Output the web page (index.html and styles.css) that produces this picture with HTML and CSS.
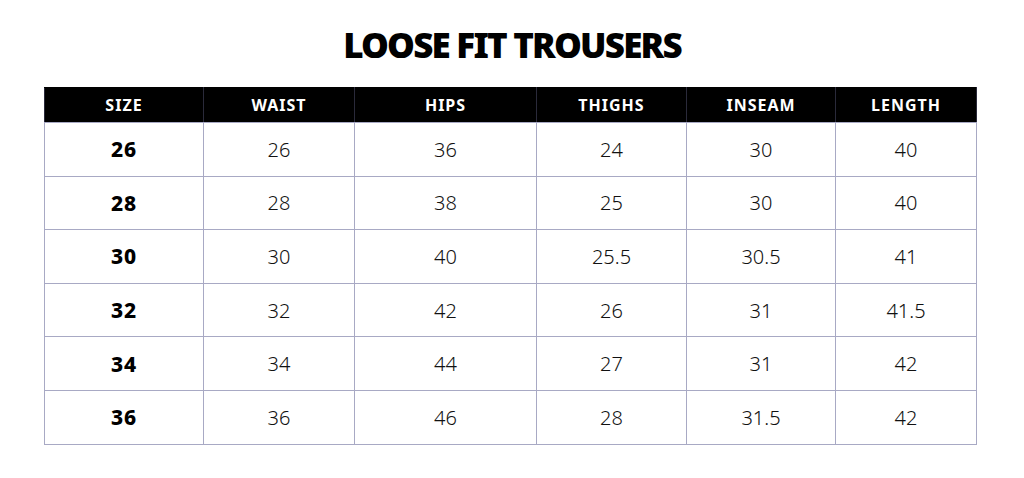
FILE: index.html
```html
<!DOCTYPE html>
<html>
<head>
<meta charset="utf-8">
<link rel="stylesheet" href="styles.css">
</head>
<body>
<div class="page">
  <h1 class="title">LOOSE FIT TROUSERS</h1>
  <table class="chart">
    <colgroup>
      <col class="c1"><col class="c2"><col class="c3"><col class="c4"><col class="c5"><col class="c6">
    </colgroup>
    <thead>
      <tr><th>SIZE</th><th>WAIST</th><th>HIPS</th><th>THIGHS</th><th>INSEAM</th><th>LENGTH</th></tr>
    </thead>
    <tbody>
      <tr><td class="size">26</td><td>26</td><td>36</td><td>24</td><td>30</td><td>40</td></tr>
      <tr><td class="size">28</td><td>28</td><td>38</td><td>25</td><td>30</td><td>40</td></tr>
      <tr><td class="size">30</td><td>30</td><td>40</td><td>25.5</td><td>30.5</td><td>41</td></tr>
      <tr><td class="size">32</td><td>32</td><td>42</td><td>26</td><td>31</td><td>41.5</td></tr>
      <tr><td class="size">34</td><td>34</td><td>44</td><td>27</td><td>31</td><td>42</td></tr>
      <tr><td class="size">36</td><td>36</td><td>46</td><td>28</td><td>31.5</td><td>42</td></tr>
    </tbody>
  </table>
</div>
</body>
</html>
```

FILE: styles.css
```css
html, body {
  margin: 0;
  padding: 0;
  background: #ffffff;
}

.page {
  width: 1024px;
  height: 478px;
  padding-top: 21px;
  box-sizing: border-box;
  font-family: "Noto Sans", "DejaVu Sans", sans-serif;
  color: #111;
}

.title {
  margin: 0 0 18px 0;
  text-align: center;
  font-size: 35px;
  line-height: 48px;
  font-weight: 900;
  color: #000;
  letter-spacing: -1.8px;
}

.chart {
  margin-left: 44px;
  width: 932px;
  border-collapse: collapse;
  table-layout: fixed;
}

.c1 { width: 159px; }
.c2 { width: 151px; }
.c3 { width: 182px; }
.c4 { width: 150px; }
.c5 { width: 149px; }
.c6 { width: 141px; }

.chart th {
  background: #000;
  color: #fff;
  height: 34px;
  padding: 0;
  font-size: 16px;
  font-weight: 700;
  letter-spacing: 1px;
  text-align: center;
  border-left: 1px solid #2a2a3a;
  border-right: 1px solid #2a2a3a;
  border-top: 1px solid #000;
  border-bottom: 1px solid #a8a9c4;
}

.chart td {
  height: 52.6px;
  padding: 0;
  text-align: center;
  font-size: 20px;
  font-weight: 300;
  color: #111;
  border: 1px solid #a8a9c4;
}

.chart td.size {
  font-size: 21px;
  font-weight: 800;
  letter-spacing: 0.8px;
  color: #000;
}
```
